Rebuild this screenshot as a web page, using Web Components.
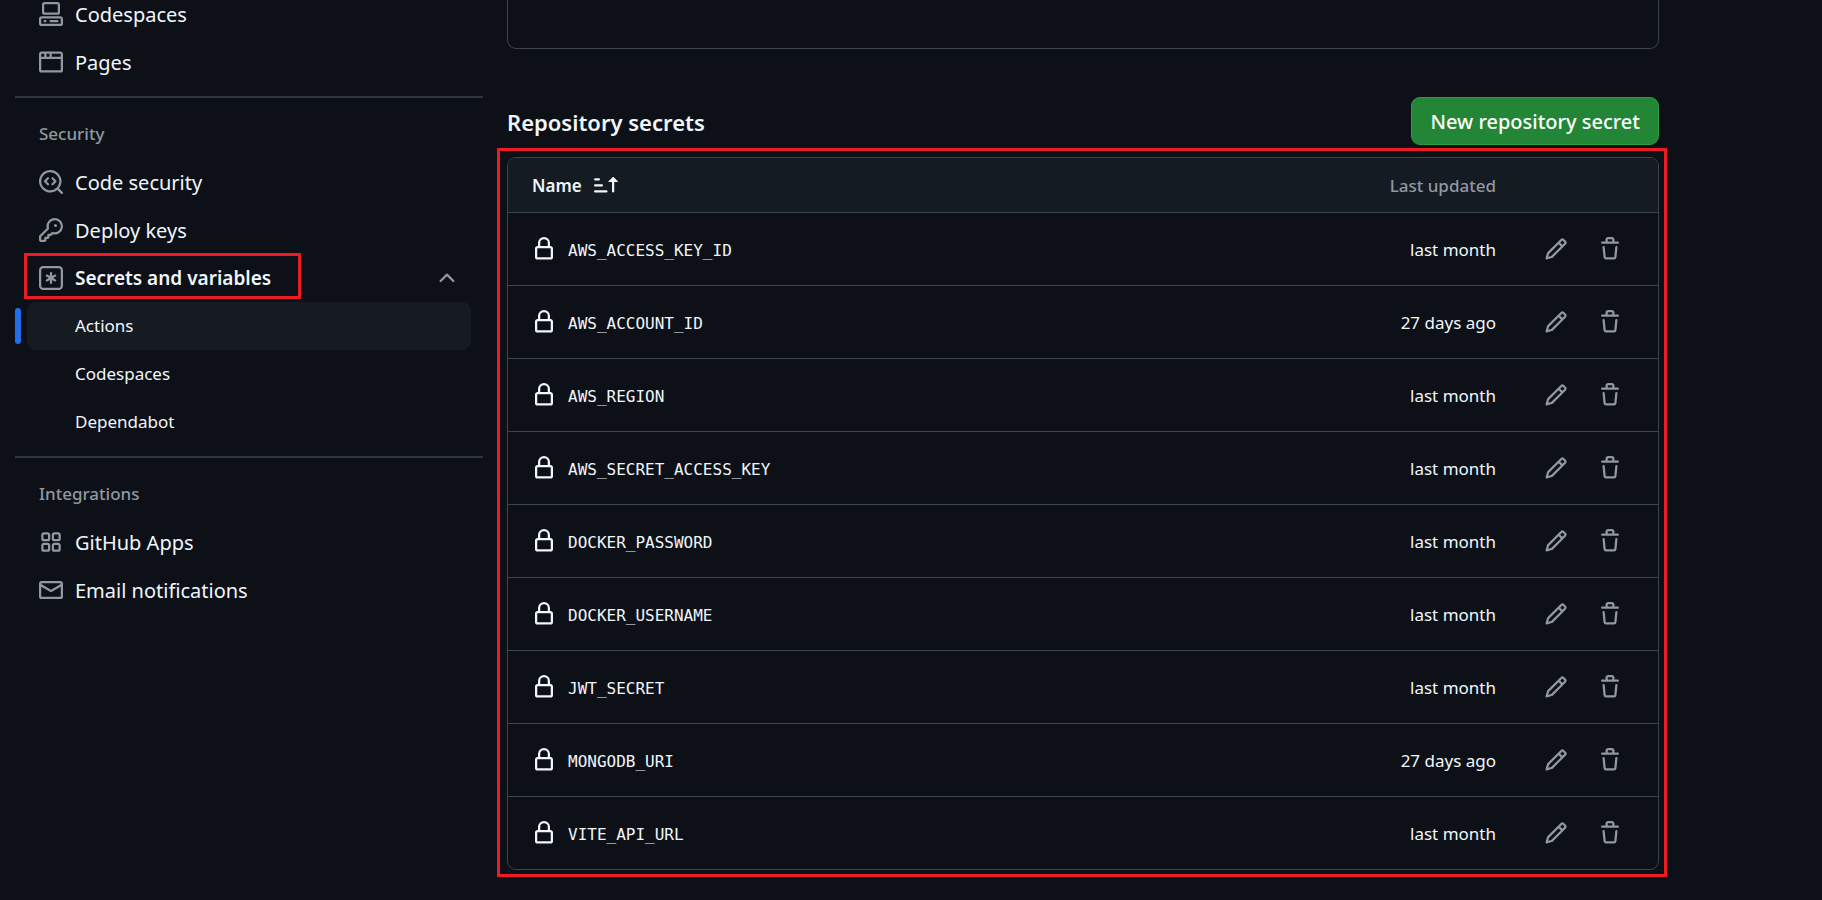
<!DOCTYPE html>
<html lang="en">
<head>
<meta charset="utf-8">
<title>Actions secrets</title>
<style>
  html { background: #0d1117; }
  body { margin: 0; background: #0d1117; color: #f0f6fc; font-family: "Noto Sans", "Open Sans", sans-serif; }
</style>
</head>
<body>
<settings-page></settings-page>
<script>
const ICONS = {
  codespaces: '<path d="M0 11.25c0-.966.784-1.75 1.75-1.75h12.5c.966 0 1.75.784 1.75 1.75v3A1.75 1.75 0 0 1 14.25 16H1.75A1.75 1.75 0 0 1 0 14.25Zm2-9.5C2 .784 2.784 0 3.75 0h8.5C13.216 0 14 .784 14 1.75v5a1.75 1.75 0 0 1-1.75 1.75h-8.5A1.75 1.75 0 0 1 2 6.75Zm1.75-.25a.25.25 0 0 0-.25.25v5c0 .138.112.25.25.25h8.5a.25.25 0 0 0 .25-.25v-5a.25.25 0 0 0-.25-.25Zm-2 9.5a.25.25 0 0 0-.25.25v3c0 .138.112.25.25.25h12.5a.25.25 0 0 0 .25-.25v-3a.25.25 0 0 0-.25-.25Z"/><path d="M7 12.75a.75.75 0 0 1 .75-.75h4.5a.75.75 0 0 1 0 1.5h-4.5a.75.75 0 0 1-.75-.75Zm-4 0a.75.75 0 0 1 .75-.75h.5a.75.75 0 0 1 0 1.5h-.5a.75.75 0 0 1-.75-.75Z"/>',
  browser: '<path d="M0 2.75C0 1.784.784 1 1.75 1h12.5c.966 0 1.75.784 1.75 1.75v10.5A1.75 1.75 0 0 1 14.25 15H1.75A1.75 1.75 0 0 1 0 13.25ZM14.5 6h-13v7.25c0 .138.112.25.25.25h12.5a.25.25 0 0 0 .25-.25Zm-6-3.5v2h6V2.75a.25.25 0 0 0-.25-.25ZM5 2.5v2h2v-2Zm-3.25 0a.25.25 0 0 0-.25.25V4.5h2v-2Z"/>',
  codescan: '<path d="M8.47 4.97a.75.75 0 0 0 0 1.06L9.94 7.5 8.47 8.97a.75.75 0 1 0 1.06 1.06l2-2a.75.75 0 0 0 0-1.06l-2-2a.75.75 0 0 0-1.06 0ZM6.53 6.03a.75.75 0 0 0-1.06-1.06l-2 2a.75.75 0 0 0 0 1.06l2 2a.75.75 0 1 0 1.06-1.06L5.06 7.5l1.47-1.47Z"/><path d="M12.246 13.307a7.501 7.501 0 1 1 1.06-1.06l2.474 2.473a.749.749 0 0 1-.326 1.275.749.749 0 0 1-.734-.215ZM1.5 7.5a6.002 6.002 0 0 0 3.608 5.504 6.002 6.002 0 0 0 6.486-1.117.748.748 0 0 1 .292-.293A6 6 0 1 0 1.5 7.5Z"/>',
  key: '<path d="M10.5 0a5.499 5.499 0 1 1-1.288 10.848l-.932.932a.749.749 0 0 1-.53.22H7v.75a.749.749 0 0 1-.22.53l-.5.5a.749.749 0 0 1-.53.22H5v.75a.749.749 0 0 1-.22.53l-.5.5a.749.749 0 0 1-.53.22h-2A1.75 1.75 0 0 1 0 14.25v-2c0-.199.079-.389.22-.53l4.932-4.932A5.5 5.5 0 0 1 10.5 0Zm-4 5.5c-.001.431.069.86.205 1.269a.75.75 0 0 1-.181.768L1.5 12.56v1.69c0 .138.112.25.25.25h1.69l.06-.06v-1.19a.75.75 0 0 1 .75-.75h1.19l.06-.06v-1.19a.75.75 0 0 1 .75-.75h1.19l1.023-1.025a.75.75 0 0 1 .768-.18A4 4 0 1 0 6.5 5.5ZM11 6a1 1 0 1 1 0-2 1 1 0 0 1 0 2Z"/>',
  asterisk: '<path d="M0 2.75A2.75 2.75 0 0 1 2.75 0h10.5A2.75 2.75 0 0 1 16 2.75v10.5A2.75 2.75 0 0 1 13.25 16H2.75A2.75 2.75 0 0 1 0 13.25ZM2.75 1.5c-.69 0-1.25.56-1.25 1.25v10.5c0 .69.56 1.25 1.25 1.25h10.5c.69 0 1.25-.56 1.25-1.25V2.75c0-.69-.56-1.25-1.25-1.25Z"/><path d="M8 4a.75.75 0 0 1 .75.75V6.7l1.69-.975a.75.75 0 0 1 .75 1.3L9.5 8l1.69.976a.75.75 0 0 1-.75 1.298L8.75 9.3v1.951a.75.75 0 0 1-1.5 0V9.299l-1.69.976a.75.75 0 0 1-.75-1.3L6.5 8l-1.69-.975a.75.75 0 0 1 .75-1.3l1.69.976V4.75A.75.75 0 0 1 8 4Z"/>',
  chevron: '<path d="M3.22 10.53a.749.749 0 0 1 0-1.06l4.25-4.25a.749.749 0 0 1 1.06 0l4.25 4.25a.749.749 0 1 1-1.06 1.06L8 6.811 4.28 10.53a.749.749 0 0 1-1.06 0Z"/>',
  apps: '<path d="M1.5 3.25c0-.966.784-1.75 1.75-1.75h2.5c.966 0 1.75.784 1.75 1.75v2.5A1.75 1.75 0 0 1 5.75 7.5h-2.5A1.75 1.75 0 0 1 1.5 5.75Zm7 0c0-.966.784-1.75 1.75-1.75h2.5c.966 0 1.75.784 1.75 1.75v2.5a1.75 1.75 0 0 1-1.75 1.75h-2.5A1.75 1.75 0 0 1 8.5 5.75Zm-7 7c0-.966.784-1.75 1.75-1.75h2.5c.966 0 1.75.784 1.75 1.75v2.5a1.75 1.75 0 0 1-1.75 1.75h-2.5a1.75 1.75 0 0 1-1.75-1.75Zm7 0c0-.966.784-1.75 1.75-1.75h2.5c.966 0 1.75.784 1.75 1.75v2.5a1.75 1.75 0 0 1-1.75 1.75h-2.5a1.75 1.75 0 0 1-1.75-1.75ZM3.25 3a.25.25 0 0 0-.25.25v2.5c0 .138.112.25.25.25h2.5A.25.25 0 0 0 6 5.75v-2.5A.25.25 0 0 0 5.75 3Zm7 0a.25.25 0 0 0-.25.25v2.5c0 .138.112.25.25.25h2.5a.25.25 0 0 0 .25-.25v-2.5a.25.25 0 0 0-.25-.25Zm-7 7a.25.25 0 0 0-.25.25v2.5c0 .138.112.25.25.25h2.5a.25.25 0 0 0 .25-.25v-2.5a.25.25 0 0 0-.25-.25Zm7 0a.25.25 0 0 0-.25.25v2.5c0 .138.112.25.25.25h2.5a.25.25 0 0 0 .25-.25v-2.5a.25.25 0 0 0-.25-.25Z"/>',
  mail: '<path d="M1.75 2h12.5c.966 0 1.75.784 1.75 1.75v8.5A1.75 1.75 0 0 1 14.25 14H1.75A1.75 1.75 0 0 1 0 12.25v-8.5C0 2.784.784 2 1.75 2ZM1.5 12.251c0 .138.112.25.25.25h12.5a.25.25 0 0 0 .25-.25V5.809L8.38 9.397a.75.75 0 0 1-.76 0L1.5 5.809v6.442Zm13-8.181v-.32a.25.25 0 0 0-.25-.25H1.75a.25.25 0 0 0-.25.25v.32L8 7.88Z"/>',
  lock: '<path d="M4 4a4 4 0 0 1 8 0v2h.25c.966 0 1.75.784 1.75 1.75v5.5A1.75 1.75 0 0 1 12.25 15h-8.5A1.75 1.75 0 0 1 2 13.25v-5.5C2 6.784 2.784 6 3.75 6H4Zm8.25 3.5h-8.5a.25.25 0 0 0-.25.25v5.5c0 .138.112.25.25.25h8.5a.25.25 0 0 0 .25-.25v-5.5a.25.25 0 0 0-.25-.25ZM10.5 6V4a2.5 2.5 0 1 0-5 0v2Z"/>',
  pencil: '<path d="M11.013 1.427a1.75 1.75 0 0 1 2.474 0l1.086 1.086a1.75 1.75 0 0 1 0 2.474l-8.61 8.61c-.21.21-.47.364-.756.445l-3.251.93a.75.75 0 0 1-.927-.928l.929-3.25c.081-.286.235-.547.445-.758l8.61-8.61Zm.176 4.823L9.75 4.81l-6.286 6.287a.253.253 0 0 0-.064.108l-.558 1.953 1.953-.558a.253.253 0 0 0 .108-.064Zm1.238-3.763a.25.25 0 0 0-.354 0L10.811 3.75l1.439 1.44 1.263-1.263a.25.25 0 0 0 0-.354Z"/>',
  trash: '<path d="M11 1.75V3h2.25a.75.75 0 0 1 0 1.5H2.75a.75.75 0 0 1 0-1.5H5V1.75C5 .784 5.784 0 6.75 0h2.5C10.216 0 11 .784 11 1.75ZM4.496 6.675l.66 6.6a.25.25 0 0 0 .249.225h5.19a.25.25 0 0 0 .249-.225l.66-6.6a.75.75 0 0 1 1.492.149l-.66 6.6A1.748 1.748 0 0 1 10.595 15h-5.19a1.75 1.75 0 0 1-1.741-1.575l-.66-6.6a.75.75 0 1 1 1.492-.15ZM6.5 1.75V3h3V1.75a.25.25 0 0 0-.25-.25h-2.5a.25.25 0 0 0-.25.25Z"/>',
  sort: '<path d="M0 12.25a.75.75 0 0 1 .75-.75h7.5a.75.75 0 0 1 0 1.5H.75a.75.75 0 0 1-.75-.75Zm0-4a.75.75 0 0 1 .75-.75h4.5a.75.75 0 0 1 0 1.5H.75A.75.75 0 0 1 0 8.25Zm0-4a.75.75 0 0 1 .75-.75h2.5a.75.75 0 0 1 0 1.5H.75A.75.75 0 0 1 0 4.25Zm12.927-1.677 2.896 2.937A.25.25 0 0 1 15.646 6H13.5v6.25a.75.75 0 0 1-1.5 0V6H9.854a.25.25 0 0 1-.177-.427l2.896-2.896a.25.25 0 0 1 .354 0Z"/>'
};

function mount(host, html) {
  const template = document.createElement('template');
  template.innerHTML = html;
  host.attachShadow({ mode: 'open' }).append(template.content.cloneNode(true));
}

class OctIcon extends HTMLElement {
  connectedCallback() {
    if (this.shadowRoot) return;
    mount(this, `
      <style>
        :host { display: block; flex: none; width: 24px; height: 24px; }
        svg { display: block; width: 100%; height: 100%; fill: currentColor; }
      </style>
      <svg viewBox="0 0 16 16" aria-hidden="true">${ICONS[this.getAttribute('name')]}</svg>`);
  }
}
customElements.define('oct-icon', OctIcon);

class MarkerFrame extends HTMLElement {
  connectedCallback() {
    if (this.shadowRoot) return;
    mount(this, `<style>
      :host { display: block; position: absolute; border: 3px solid #ed1c24; pointer-events: none; box-sizing: border-box; }
    </style>`);
  }
}
customElements.define('marker-frame', MarkerFrame);

class NavItem extends HTMLElement {
  connectedCallback() {
    if (this.shadowRoot) return;
    const icon = this.getAttribute('icon');
    mount(this, `
      <style>
        :host { display: block; position: relative; margin: 0 12px; font-size: 20px; }
        a { display: flex; box-sizing: border-box; align-items: center; gap: 12px; height: 48px; padding: 0 12px; border-radius: 9px; color: #f0f6fc; text-decoration: none; }
        oct-icon { color: #9198a1; }
        :host([sub]) { font-size: 17px; }
        :host([sub]) a { padding: 0 12px 2px 48px; }
        :host([current]) a { background: #161b22; }
        :host([current])::before { content: ""; position: absolute; left: -12px; top: 6px; width: 6px; height: 36px; border-radius: 3px; background: #1f6feb; }
      </style>
      <a href="#"${this.hasAttribute('current') ? ' aria-current="page"' : ''}>${icon ? `<oct-icon name="${icon}"></oct-icon>` : ''}<slot></slot></a>`);
  }
}
customElements.define('nav-item', NavItem);

class NavGroup extends HTMLElement {
  connectedCallback() {
    if (this.shadowRoot) return;
    mount(this, `
      <style>
        :host { display: block; position: relative; }
        button { display: flex; align-items: center; gap: 12px; width: calc(100% - 24px); height: 48px; margin: 0 12px; padding: 0 12px; border: 0; background: none; color: #f0f6fc; font: 600 19px "Noto Sans", "Open Sans", sans-serif; text-align: left; }
        span { flex: 1; }
        oct-icon { color: #9198a1; }
        marker-frame { left: 9px; top: -1px; width: 277px; height: 46px; }
      </style>
      <button type="button" aria-expanded="true"><oct-icon name="asterisk"></oct-icon><span>${this.getAttribute('label')}</span><oct-icon name="chevron"></oct-icon></button>
      <slot></slot>
      <marker-frame></marker-frame>`);
  }
}
customElements.define('nav-group', NavGroup);

class NavSection extends HTMLElement {
  connectedCallback() {
    if (this.shadowRoot) return;
    mount(this, `
      <style>
        :host { display: block; margin-top: 10px; padding-top: 12px; border-top: 2px solid #2f353d; }
        h3 { margin: 0; padding: 0 24px; font-size: 17px; font-weight: 500; line-height: 48px; color: #9198a1; }
      </style>
      <h3>${this.getAttribute('label')}</h3>
      <slot></slot>`);
  }
}
customElements.define('nav-section', NavSection);

class SettingsNav extends HTMLElement {
  connectedCallback() {
    if (this.shadowRoot) return;
    mount(this, `
      <style>:host { display: block; } nav { margin-top: -10px; }</style>
      <nav aria-label="Settings">
        <nav-item icon="codespaces">Codespaces</nav-item>
        <nav-item icon="browser">Pages</nav-item>
        <nav-section label="Security">
          <nav-item icon="codescan">Code security</nav-item>
          <nav-item icon="key">Deploy keys</nav-item>
          <nav-group label="Secrets and variables">
            <nav-item sub current>Actions</nav-item>
            <nav-item sub>Codespaces</nav-item>
            <nav-item sub>Dependabot</nav-item>
          </nav-group>
        </nav-section>
        <nav-section label="Integrations">
          <nav-item icon="apps">GitHub Apps</nav-item>
          <nav-item icon="mail">Email notifications</nav-item>
        </nav-section>
      </nav>`);
  }
}
customElements.define('settings-nav', SettingsNav);

class SecretsTable extends HTMLElement {
  connectedCallback() {
    if (this.shadowRoot) return;
    const secrets = [
      ['AWS_ACCESS_KEY_ID', 'last month'],
      ['AWS_ACCOUNT_ID', '27 days ago'],
      ['AWS_REGION', 'last month'],
      ['AWS_SECRET_ACCESS_KEY', 'last month'],
      ['DOCKER_PASSWORD', 'last month'],
      ['DOCKER_USERNAME', 'last month'],
      ['JWT_SECRET', 'last month'],
      ['MONGODB_URI', '27 days ago'],
      ['VITE_API_URL', 'last month']
    ];
    const rows = secrets.map(([name, updated]) => `
      <tr>
        <td><div class="name"><oct-icon name="lock"></oct-icon><code>${name}</code></div></td>
        <td class="updated">${updated}</td>
        <td class="actions"><div>
          <button type="button" aria-label="Edit ${name}"><oct-icon name="pencil"></oct-icon></button>
          <button type="button" aria-label="Delete ${name}"><oct-icon name="trash"></oct-icon></button>
        </div></td>
      </tr>`).join('');
    mount(this, `
      <style>
        :host { display: block; position: relative; }
        table { width: 100%; border: 1px solid #3d444d; border-radius: 9px; border-spacing: 0; overflow: hidden; font-size: 17px; }
        th, td { padding: 0; text-align: left; }
        th { height: 54px; background: #151b23; font-weight: 500; color: #9198a1; }
        td { height: 72px; border-top: 1px solid #3d444d; }
        th:first-child, td:first-child { padding-left: 24px; }
        th.updated, td.updated { text-align: right; }
        .actions { width: 162px; }
        .actions div { display: flex; gap: 6px; padding-left: 36px; }
        .name { display: flex; align-items: center; gap: 12px; }
        code { padding-top: 2px; font: 16px "DejaVu Sans Mono", monospace; }
        button { border: 0; background: none; color: inherit; font: inherit; }
        .sort { display: flex; align-items: center; gap: 12px; padding: 0; font-weight: 600; color: #f0f6fc; }
        .actions button { width: 48px; height: 48px; padding: 12px; color: #9198a1; }
        marker-frame { inset: -9px -8px -7px -10px; }
      </style>
      <table>
        <thead><tr>
          <th aria-sort="ascending"><button class="sort" type="button">Name<oct-icon name="sort"></oct-icon></button></th>
          <th class="updated">Last updated</th>
          <th class="actions"></th>
        </tr></thead>
        <tbody>${rows}</tbody>
      </table>
      <marker-frame></marker-frame>`);
  }
}
customElements.define('secrets-table', SecretsTable);

class SecretsPanel extends HTMLElement {
  connectedCallback() {
    if (this.shadowRoot) return;
    mount(this, `
      <style>
        :host { display: block; }
        .environment { height: 48px; border: 1px solid #3d444d; border-top: 0; border-radius: 0 0 9px 9px; }
        header { display: flex; align-items: center; justify-content: space-between; margin: 48px 0 12px; }
        h2 { margin: 0; padding-top: 2px; font-size: 22px; font-weight: 600; line-height: 30px; }
        button { height: 48px; padding: 0 18px; border: 1px solid #2e9a44; border-radius: 9px; background: #238636; color: #ffffff; font: 500 20px "Noto Sans", "Open Sans", sans-serif; }
      </style>
      <div class="environment"></div>
      <header><h2>Repository secrets</h2><button type="button">New repository secret</button></header>
      <secrets-table></secrets-table>`);
  }
}
customElements.define('secrets-panel', SecretsPanel);

class SettingsPage extends HTMLElement {
  connectedCallback() {
    if (this.shadowRoot) return;
    mount(this, `
      <style>
        :host { display: grid; grid-template-columns: 468px minmax(0, 1fr); gap: 24px; padding: 0 163px 23px 15px; }
      </style>
      <settings-nav></settings-nav>
      <main><secrets-panel></secrets-panel></main>`);
  }
}
customElements.define('settings-page', SettingsPage);
</script>
</body>
</html>
